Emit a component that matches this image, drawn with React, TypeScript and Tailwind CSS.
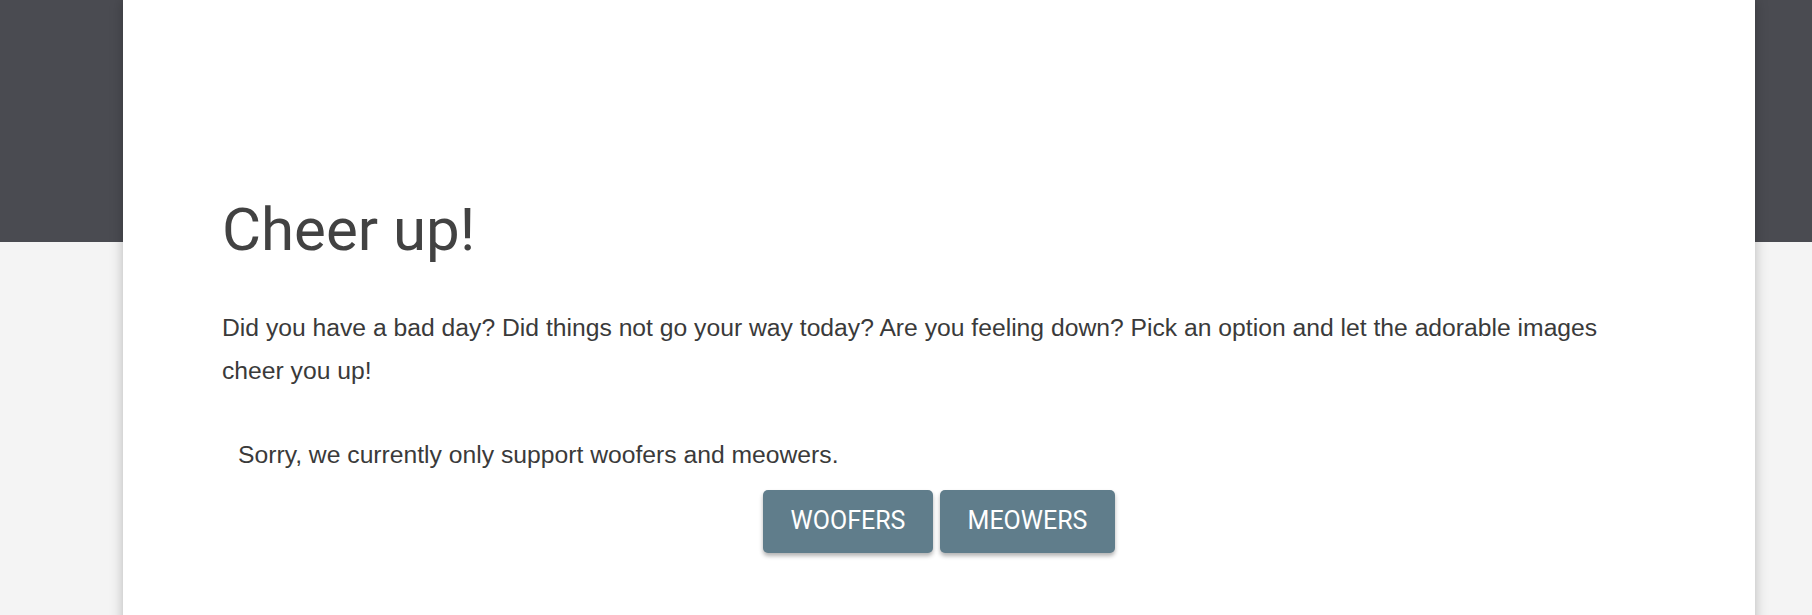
import React from "react";

export default function App() {
  return (
    <div className="relative min-h-[615px] w-full bg-[#f4f4f4] overflow-hidden">
      <div className="absolute left-0 top-0 h-[242px] w-full bg-[#4a4b51]" />
      <div className="relative ml-[123px] w-[1632px] min-h-[700px] bg-white shadow-[0_0_12px_rgba(0,0,0,0.25)] pl-[99px] pr-[100px] pt-[194px]">
        <h1
          className="text-[60px] leading-[72px] text-[#424242] font-normal"
          style={{ fontFamily: "Roboto, sans-serif" }}
        >
          Cheer up!
        </h1>
        <p
          className="mt-[40px] text-[24.7px] leading-[43.2px] text-[#3a3a3a] pr-[30px]"
          style={{ fontFamily: "'Liberation Sans', Arial, sans-serif" }}
        >
          Did you have a bad day? Did things not go your way today? Are you feeling down? Pick an option and let the adorable images cheer you up!
        </p>
        <p
          className="mt-[41px] ml-[16px] text-[24.7px] leading-[43.2px] text-[#3a3a3a]"
          style={{ fontFamily: "'Liberation Sans', Arial, sans-serif" }}
        >
          Sorry, we currently only support woofers and meowers.
        </p>
        <div
          className="mt-[13px] flex justify-center gap-[7px] -ml-[99px] -mr-[100px]"
          style={{ fontFamily: "Roboto, sans-serif" }}
        >
          <button className="h-[63px] w-[170px] rounded-[5px] bg-[#607d8b] text-white text-[25px] uppercase shadow-[0_3px_4px_rgba(0,0,0,0.3)]">
            Woofers
          </button>
          <button className="h-[63px] w-[175px] rounded-[5px] bg-[#607d8b] text-white text-[25px] uppercase shadow-[0_3px_4px_rgba(0,0,0,0.3)]">
            Meowers
          </button>
        </div>
      </div>
    </div>
  );
}
